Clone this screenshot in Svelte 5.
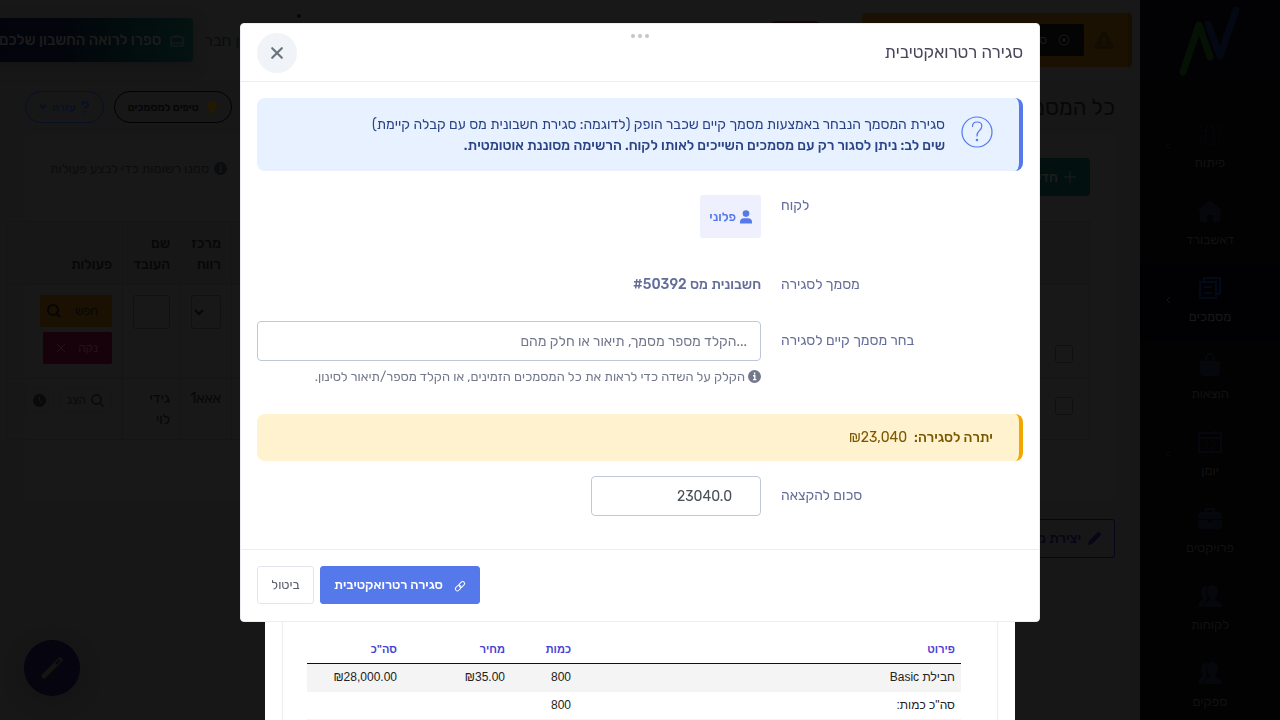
<script lang="ts">
    let search = '';
    let amount = '23040.0';

    const navItems = [
        { label: 'פיתוח', icon: 'bug', arrow: true },
        { label: 'דאשבורד', icon: 'home' },
        { label: 'מסמכים', icon: 'docs', arrow: true, active: true },
        { label: 'הוצאות', icon: 'bag' },
        { label: 'יומן', icon: 'calendar', arrow: true },
        { label: 'פרויקטים', icon: 'case' },
        { label: 'לקוחות', icon: 'users' },
        { label: 'ספקים', icon: 'users' }
    ];
</script>

<div class="page" dir="rtl">
    <aside class="sidebar">
        <a class="logo" href="/" aria-label="ראשי">
            <svg width="64" height="72" viewBox="0 0 64 72" fill="none" stroke-width="7" stroke-linecap="round" stroke-linejoin="round">
                <path d="M30 20 L42 52 L58 6" stroke="#030812" />
                <path d="M5 68 L21 21 L32 53" stroke="#061106" />
            </svg>
        </a>
        <nav>
            {#each navItems as item}
                <a class="nav-item" class:active={item.active} href="/">
                    <svg class="nav-icon" width="24" height="24" viewBox="0 0 24 24" fill="currentColor">
                        {#if item.icon === 'home'}
                            <path d="M12 1 L25 12 H22 V23 H15 V16 H9 V23 H2 V12 H-1 Z" />
                        {:else if item.icon === 'docs'}
                            <path d="M6 5 V2 H22 V18 H18 M2 6 H18 V22 H2 Z M6 11 H14 M6 17 H14" fill="none" stroke="currentColor" stroke-width="2" />
                        {:else if item.icon === 'bag'}
                            <path d="M2 8 H22 V20 Q22 23 19 23 H5 Q2 23 2 20 Z" />
                            <path d="M8 11 V6 Q8 1 12 1 Q16 1 16 6 V11" fill="none" stroke="currentColor" stroke-width="2" />
                        {:else if item.icon === 'calendar'}
                            <path d="M1 3 H23 V22 H1 Z M1 8 H23 M7 1 V4 M17 1 V4" fill="none" stroke="currentColor" stroke-width="2" />
                            <path d="M7 12 L9 11 V19 M12 13 Q13 11 15 11 Q18 12 16 15 L12 19 H17" fill="none" stroke="currentColor" />
                        {:else if item.icon === 'case'}
                            <path d="M7 5 V1 H17 V5 H21 Q24 5 24 8 V12 H0 V8 Q0 5 3 5 Z M9 3 V5 H15 V3 Z" fill-rule="evenodd" />
                            <path d="M0 13 H9 Q12 18 15 13 H24 V19 Q24 22 21 22 H3 Q0 22 0 19 Z" />
                        {:else if item.icon === 'users'}
                            <path d="M8 2 Q2 2 3 9 Q4 14 5 15 Q0 18 0 23 H5 Q6 19 9 16 Q7 8 10 2 Z" />
                            <path d="M15 1 Q20 1 20 8 Q19 13 17 14 V16 Q24 18 24 23 H6 Q6 18 12 16 V14 Q9 12 9 7 Q9 1 15 1 Z" />
                        {:else}
                            <path d="M8 10 Q8 4 12 4 Q16 4 16 10 V23 H8 Z M8 4 L10 5 M16 4 L14 5 M1 4 H5 M19 4 H23 M8 13 L3 17 V23 M16 13 L21 17 V23 M1 10 L5 8 M23 10 L19 8" fill="none" stroke="currentColor" stroke-width="1.4" stroke-dasharray="3 1" />
                        {/if}
                    </svg>
                    <span>{item.label}</span>
                    {#if item.arrow}
                        <svg class="nav-arrow" width="6" height="8" viewBox="0 0 6 8" fill="none" stroke="currentColor">
                            <path d="M4 1 L1 4 L4 7" />
                        </svg>
                    {/if}
                </a>
            {/each}
        </nav>
    </aside>

    <div class="main">
        <header class="topbar">
            <div class="banner">
                <svg width="20" height="18" viewBox="0 0 20 18">
                    <path d="M10 0 Q11 0 12 2 L20 16 Q20 18 18 18 H2 Q0 18 0 16 L8 2 Q9 0 10 0 Z" fill="#120c02" />
                    <path d="M10 6 V11 M10 13 V15" stroke="#1a1102" stroke-width="2" />
                </svg>
                <button class="banner-btn">
                    <svg width="12" height="12" viewBox="0 0 12 12" fill="none" stroke="currentColor">
                        <circle cx="6" cy="6" r="5" />
                        <path d="M4 4 L8 8 M8 4 L4 8" />
                    </svg>
                    סיום
                </button>
            </div>
            <span class="pill"></span>
            <span class="dot"></span>
            <div class="top-links">
                <a class="invite" href="/">הזמן חבר</a>
                <button class="share">
                    <svg width="14" height="13" viewBox="0 0 14 13" fill="none" stroke="currentColor">
                        <path d="M1 3 H13 V12 H1 Z M5 3 Q5 1 7 1 Q9 1 9 3 M1 9 H13" />
                    </svg>
                    ספרו לרואה החשבון שלכם
                </button>
            </div>
        </header>

        <div class="title-row">
            <h1>כל המסמכים</h1>
            <button class="round">
                <svg width="10" height="13" viewBox="0 0 10 13" fill="#211901">
                    <circle cx="5" cy="5" r="5" />
                    <path d="M2 8 H8 L7 12 H3 Z" />
                </svg>
                טיפים למסמכים
            </button>
            <button class="round help">
                <svg width="8" height="12" viewBox="0 0 8 12" fill="none" stroke="currentColor" stroke-width="2">
                    <path d="M1 4 Q1 1 4 1 Q7 1 7 4 Q7 5 4 7 V8 M4 10 V12" />
                </svg>
                <span>עזרה</span>
                <svg width="8" height="6" viewBox="0 0 8 6" fill="none" stroke="currentColor" stroke-width="2">
                    <path d="M1 1 L4 4 L7 1" />
                </svg>
            </button>
        </div>

        <section class="card">
            <div class="card-top">
                <button class="new-btn">
                    <svg width="12" height="12" viewBox="0 0 12 12" stroke="currentColor" stroke-width="1">
                        <path d="M6 0 V12 M0 6 H12" />
                    </svg>
                    חדש
                </button>
                <p class="select-info">
                    <svg width="13" height="13" viewBox="0 0 13 13">
                        <circle cx="6.5" cy="6.5" r="6.5" fill="#0b0c0e" />
                        <path d="M6.6 2.6 V4.4 M5 5.8 H6.8 V9.6 M5 9.6 H8.4" fill="none" stroke="#171717" stroke-width="1.4" />
                    </svg>
                    סמנו רשומות כדי לבצע פעולות
                </p>
            </div>
            <table class="list">
                <thead>
                    <tr>
                        <th class="col-check"></th>
                        <th></th>
                        <th class="col-center">מרכז רווח</th>
                        <th class="col-name">שם העובד</th>
                        <th class="col-actions">פעולות</th>
                    </tr>
                </thead>
                <tbody>
                    <tr class="filters">
                        <td><input type="checkbox" aria-label="בחר הכל" /></td>
                        <td></td>
                        <td>
                            <div class="select-wrap">
                                <select aria-label="מרכז רווח"><option></option></select>
                                <svg width="8" height="6" viewBox="0 0 8 6" fill="none" stroke="currentColor" stroke-width="2">
                                    <path d="M0 1 L4 5 L8 1" />
                                </svg>
                            </div>
                        </td>
                        <td><input type="text" aria-label="שם העובד" /></td>
                        <td>
                            <button class="filter find">
                                חפש
                                <svg width="14" height="14" viewBox="0 0 14 14" fill="none" stroke="currentColor" stroke-width="2">
                                    <circle cx="6" cy="6" r="5" /><path d="M9 9 L13 13" />
                                </svg>
                            </button>
                            <button class="filter clear">
                                נקה
                                <svg width="10" height="10" viewBox="0 0 10 10" stroke="currentColor">
                                    <path d="M1 1 L9 9 M9 1 L1 9" />
                                </svg>
                            </button>
                        </td>
                    </tr>
                    <tr>
                        <td><input type="checkbox" aria-label="בחר" /></td>
                        <td></td>
                        <td>אאא1</td>
                        <td>גידי לוי</td>
                        <td>
                            <div class="row-actions">
                                <button>
                                    <svg width="13" height="13" viewBox="0 0 13 13" fill="none" stroke="currentColor" stroke-width="1.6">
                                        <circle cx="5.5" cy="5.5" r="4.6" /><path d="M9 9 L12.5 12.5" />
                                    </svg>
                                    הצג
                                </button>
                                <button aria-label="היסטוריה">
                                    <svg width="13" height="13" viewBox="0 0 13 13">
                                        <circle cx="6.5" cy="6.5" r="6.5" fill="currentColor" />
                                        <path d="M6.5 2.5 V6.5 L9 8.5" fill="none" stroke="#171717" />
                                    </svg>
                                </button>
                            </div>
                        </td>
                    </tr>
                </tbody>
            </table>
        </section>

        <button class="create">
            <svg width="13" height="13" viewBox="0 0 13 13" fill="currentColor">
                <path d="M0 13 L1 9 L9 1 Q11 -1 12 1 Q14 2 12 4 L4 12 Z" />
            </svg>
            יצירת מסמך חדש
        </button>
    </div>
</div>

<button class="fab" aria-label="עריכה">
    <svg width="24" height="24" viewBox="0 0 24 24">
        <path d="M4 20 L20 4" stroke="#141411" stroke-width="5" stroke-linecap="round" />
        <path d="M16 8 L20 4" stroke="#06040f" stroke-width="2" />
    </svg>
</button>

<div class="sheet-layer" dir="rtl">
    <div class="sheet">
        <div class="paper">
            <table>
                <thead>
                    <tr><th>פירוט</th><th class="qty">כמות</th><th class="price">מחיר</th><th class="sum">סה"כ</th></tr>
                </thead>
                <tbody>
                    <tr class="shaded"><td>חבילת Basic</td><td>800</td><td>₪35.00</td><td>₪28,000.00</td></tr>
                    <tr><td>סה"כ כמות:</td><td>800</td><td></td><td></td></tr>
                </tbody>
            </table>
        </div>
    </div>
</div>

<div class="modal-layer" dir="rtl">
    <div class="modal" role="dialog" aria-labelledby="modal-title">
        <header class="modal-head">
            <h2 id="modal-title">סגירה רטרואקטיבית</h2>
            <span class="grip"><i></i><i></i><i></i></span>
            <button class="close" aria-label="סגור">
                <svg width="12" height="12" viewBox="0 0 12 12" stroke="currentColor" stroke-width="2.2" stroke-linecap="round">
                    <path d="M1.2 1.2 L10.8 10.8 M10.8 1.2 L1.2 10.8" />
                </svg>
            </button>
        </header>

        <div class="modal-body">
            <div class="alert info">
                <svg width="32" height="32" viewBox="0 0 32 32" fill="none" stroke="#5578eb" stroke-width="1.2">
                    <circle cx="16" cy="16" r="15" />
                    <path d="M11.5 10.5 Q11.5 6 16.2 6 Q20.8 6 20.8 10 Q20.8 12.5 18.5 14.5 Q16 16.5 16 20" stroke-linecap="round" />
                    <circle cx="16" cy="24" r="0.7" />
                </svg>
                <p>
                    סגירת המסמך הנבחר באמצעות מסמך קיים שכבר הופק (לדוגמה: סגירת חשבונית מס עם קבלה קיימת)<br />
                    <strong>שים לב: ניתן לסגור רק עם מסמכים השייכים לאותו לקוח. הרשימה מסוננת אוטומטית.</strong>
                </p>
            </div>

            <div class="field customer">
                <span class="label">לקוח</span>
                <div>
                    <a class="customer-tag" href="/">
                        <svg width="12" height="14" viewBox="0 0 12 14" fill="currentColor">
                            <circle cx="6" cy="3.6" r="3.3" />
                            <path d="M0 13.5 V12 Q0 8.2 4 8.2 H8 Q12 8.2 12 12 V13.5 Z" />
                        </svg>
                        פלוני
                    </a>
                </div>
            </div>

            <div class="field doc">
                <span class="label">מסמך לסגירה</span>
                <strong>חשבונית מס #50392</strong>
            </div>

            <div class="field">
                <label class="label" for="doc-search">בחר מסמך קיים לסגירה</label>
                <div>
                    <input id="doc-search" type="text" dir="ltr" placeholder="הקלד מספר מסמך, תיאור או חלק מהם..." bind:value={search} />
                    <p class="hint">
                        <svg width="13" height="13" viewBox="0 0 13 13">
                            <circle cx="6.5" cy="6.5" r="6.5" fill="#74788d" />
                            <path d="M6.6 2.6 V4.4 M5 5.8 H6.8 V9.6 M5 9.6 H8.4" fill="none" stroke="#fff" stroke-width="1.4" />
                        </svg>
                        הקלק על השדה כדי לראות את כל המסמכים הזמינים, או הקלד מספר/תיאור לסינון.
                    </p>
                </div>
            </div>

            <div class="alert balance">
                <strong>יתרה לסגירה:</strong>
                <span>₪23,040</span>
            </div>

            <div class="field">
                <label class="label" for="amount">סכום להקצאה</label>
                <div>
                    <input id="amount" class="amount" type="text" bind:value={amount} />
                </div>
            </div>
        </div>

        <footer class="modal-foot">
            <button class="btn primary">
                <svg width="10" height="10" viewBox="0 0 10 10" fill="none" stroke="currentColor" stroke-width="1">
                    <rect x="-3.2" y="-2" width="6.4" height="4" rx="2" transform="translate(6.8 3.4) rotate(-45)" />
                    <rect x="-3.2" y="-2" width="6.4" height="4" rx="2" transform="translate(3.2 7) rotate(-45)" />
                </svg>
                סגירה רטרואקטיבית
            </button>
            <button class="btn cancel">ביטול</button>
        </footer>
    </div>
</div>

<style>
    :global(body) {
        background: #171717;
        font-family: Rubik, "Open Sans", sans-serif;
        font-size: 14px;
        line-height: 21px;
        overflow: hidden;
    }

    :global(*) {
        box-sizing: border-box;
    }

    button,
    input,
    select {
        font: inherit;
        margin: 0;
    }

    button {
        border: 0;
        padding: 0;
        display: inline-flex;
        align-items: center;
        white-space: nowrap;
    }

    a {
        text-decoration: none;
    }

    h1,
    h2,
    p {
        margin: 0;
        font-weight: 400;
    }

    strong,
    th {
        font-weight: 500;
    }

    svg {
        flex-shrink: 0;
        overflow: visible;
    }

    /* sidebar */
    .page {
        display: flex;
        height: 100vh;
        overflow: hidden;
        color: #070707;
    }

    .sidebar {
        width: 140px;
        flex-shrink: 0;
        background: #020202;
    }

    .logo {
        display: flex;
        justify-content: center;
        height: 80px;
        padding-top: 4px;
        background: #020204;
    }

    nav {
        padding-top: 30px;
    }

    .nav-item {
        position: relative;
        height: 77px;
        display: flex;
        flex-direction: column;
        align-items: center;
        gap: 6px;
        padding-top: 12px;
        color: #111;
        font-size: 13px;
    }

    .nav-icon {
        color: #06070c;
    }

    .nav-item.active {
        background: #010103;
        color: #181818;
    }

    .active .nav-icon {
        color: #030a17;
    }

    .nav-arrow {
        position: absolute;
        left: 26px;
        top: 32px;
        color: #0a0a0a;
    }

    .active .nav-arrow {
        color: #161616;
    }

    /* page behind the dialog */
    .main {
        flex: 1;
        min-width: 0;
    }

    .topbar {
        height: 80px;
        display: flex;
        align-items: flex-start;
        padding: 13px 8px 0 0;
        background: #181818;
    }

    .banner {
        width: 270px;
        height: 54px;
        display: flex;
        align-items: center;
        gap: 10px;
        padding-right: 14px;
        background: #1a1102;
        border-right: 4px solid #160e01;
        border-radius: 4px;
    }

    .banner-btn {
        height: 32px;
        gap: 11px;
        padding: 0 14px;
        background: #040404;
        color: #1a1a1a;
        border-radius: 2px;
        font-size: 12px;
    }

    .pill {
        width: 66px;
        height: 32px;
        margin: 8px 34px 0 0;
        border-radius: 16px;
        background: #17030a;
    }

    .dot {
        width: 4px;
        height: 4px;
        margin: 1px auto 0 32px;
        border-radius: 50%;
        background: #030815;
    }

    .top-links {
        display: flex;
        align-items: center;
        gap: 11px;
        margin-top: 5px;
        margin-left: -15px;
    }

    .invite {
        color: #0b0c10;
        font-size: 16px;
    }

    .share {
        height: 44px;
        gap: 9px;
        padding: 0 9px 0 14px;
        border-radius: 4px;
        background: linear-gradient(270deg, #031310, #02060b 60%, #02040b);
        color: #1c1c1c;
        font-size: 15px;
        font-weight: 500;
        box-shadow: 0 4px 14px #141414;
    }

    .title-row {
        display: flex;
        align-items: center;
        gap: 10px;
        height: 54px;
        padding: 0 25px;
    }

    h1 {
        flex: 1;
        font-size: 22px;
    }

    .round {
        height: 32px;
        gap: 8px;
        padding: 0 14px 0 13px;
        border: 1px solid #020202;
        border-radius: 16px;
        background: transparent;
        color: #050505;
        font-size: 11px;
        font-weight: 500;
    }

    .help {
        gap: 5px;
        padding: 0 14px 0 13px;
        border-color: #081024;
        color: #081024;
    }

    .card {
        margin: 0 25px;
        height: 366px;
        padding: 24px 25px 0;
        background: #181818;
        border-radius: 4px;
    }

    .card-top {
        display: flex;
        justify-content: space-between;
        height: 63px;
    }

    .new-btn {
        height: 38px;
        gap: 6px;
        padding: 0 14px;
        border-radius: 4px;
        background: #021110;
        color: #1d1d1d;
        font-weight: 500;
    }

    .select-info {
        display: flex;
        align-items: center;
        gap: 5px;
        height: 21px;
        color: #0c0c0e;
        font-size: 13px;
    }

    .list {
        width: calc(100% + 43px);
        table-layout: fixed;
        border-collapse: collapse;
    }

    .list th,
    .list td {
        border: 1px solid #151515;
        padding: 9px 10px;
        vertical-align: top;
        text-align: right;
    }

    .list th {
        height: 63px;
        vertical-align: bottom;
        background: #171717;
    }

    .col-check {
        width: 51px;
    }

    .col-center {
        width: 51px;
    }

    .col-name {
        width: 58px;
    }

    .col-actions {
        width: 115px;
    }

    .list .filters td {
        height: 94px;
        padding-top: 10px;
    }

    .list input[type='text'],
    .list select {
        appearance: none;
        display: block;
        width: 100%;
        height: 34px;
        border: 1px solid #111;
        border-radius: 3px;
        background: transparent;
    }

    .select-wrap {
        position: relative;
    }

    .select-wrap svg {
        position: absolute;
        left: 4px;
        top: 14px;
    }

    .list input[type='checkbox'] {
        appearance: none;
        display: block;
        width: 18px;
        height: 18px;
        margin: 50px 6px 0;
        border: 1px solid #101010;
        border-radius: 3px;
    }

    .list tr:last-child input[type='checkbox'] {
        margin-top: 9px;
    }

    .filter {
        height: 32px;
        padding: 0 14px;
        border-radius: 2px;
        font-size: 12px;
        margin-bottom: 5px;
    }

    .find {
        width: 72px;
        gap: 14px;
        background: #1a1102;
        color: #060606;
    }

    .clear {
        width: 69px;
        gap: 12px;
        background: #17020b;
        color: #24141a;
    }

    .row-actions {
        display: flex;
        gap: 5px;
    }

    .row-actions button {
        height: 24px;
        gap: 5px;
        padding: 0 7px;
        border: 1px solid #161616;
        background: transparent;
        color: #0a0a0c;
        font-size: 12px;
    }

    .create {
        height: 39px;
        gap: 7px;
        margin: 19px 25px 0;
        padding: 0 13px;
        border: 1px solid #070518;
        border-radius: 3px;
        background: transparent;
        color: #070518;
        font-weight: 500;
    }

    .fab {
        position: fixed;
        left: 24px;
        bottom: 24px;
        width: 56px;
        height: 56px;
        justify-content: center;
        border-radius: 50%;
        background: #06040f;
        box-shadow: 0 6px 18px #141416;
    }

    /* document preview */
    .sheet-layer,
    .modal-layer {
        position: fixed;
        inset: 0;
        display: flex;
        justify-content: center;
    }

    .sheet-layer {
        align-items: flex-end;
    }

    .sheet {
        width: 750px;
        height: 92%;
        padding: 0 17px;
        background: #fff;
    }

    .paper {
        height: 100%;
        display: flex;
        align-items: flex-end;
        padding: 0 36px 0 24px;
        border: solid #ececec;
        border-width: 0 1px;
        font-family: "Liberation Sans", sans-serif;
        font-size: 12px;
        color: #222;
    }

    .paper table {
        width: 100%;
        border-collapse: collapse;
    }

    .paper th,
    .paper td {
        height: 28px;
        padding: 0 6px;
        text-align: right;
    }

    .paper th {
        color: #4a3fd6;
        font-size: 11px;
        font-weight: 700;
        border-bottom: 1px solid #111;
    }

    .paper tbody tr {
        border-bottom: 1px solid #f3f3f3;
    }

    .shaded {
        background: #f4f4f4;
    }

    .qty {
        width: 66px;
    }

    .price {
        width: 108px;
    }

    .sum {
        width: 96px;
    }

    /* dialog */
    .modal-layer {
        align-items: flex-start;
        padding: 23px 16px;
    }

    .modal {
        width: 100%;
        max-width: 800px;
        background: #fff;
        border: 1px solid #ebedf2;
        border-radius: 4px;
        color: #646c9a;
    }

    .modal-head {
        position: relative;
        display: flex;
        align-items: center;
        justify-content: space-between;
        height: 58px;
        padding: 0 16px;
        border-bottom: 1px solid #ebedf2;
    }

    h2 {
        font-size: 17px;
        color: #48465b;
    }

    .grip {
        position: absolute;
        top: 10px;
        left: 50%;
        transform: translateX(-50%);
        display: flex;
        gap: 3px;
    }

    .grip i {
        width: 4px;
        height: 4px;
        border-radius: 50%;
        background: #c5c5cb;
    }

    .close {
        width: 40px;
        height: 40px;
        justify-content: center;
        border-radius: 50%;
        background: #f0f3f8;
        color: #6c757d;
    }

    .modal-body {
        padding: 16px 16px 33px;
    }

    .alert {
        display: flex;
        align-items: center;
        border-radius: 8px;
    }

    .info {
        gap: 16px;
        height: 73px;
        padding: 0 26px 0 16px;
        margin-bottom: 24px;
        border-right: 4px solid #5578eb;
        background: #e7f1ff;
        color: #2a4385;
        white-space: nowrap;
    }

    .info svg {
        margin-bottom: 5px;
    }

    .field {
        display: grid;
        grid-template-columns: 12fr 25fr;
        column-gap: 20px;
        align-items: start;
    }

    .label {
        padding-top: 9px;
        text-align: left;
    }

    .customer .label,
    .doc .label {
        padding-top: 0;
    }

    .customer {
        margin-bottom: 36px;
    }

    .customer-tag {
        display: inline-flex;
        align-items: center;
        gap: 4px;
        height: 43px;
        padding: 0 9px;
        border-radius: 3px;
        background: #eef0fd;
        color: #5578eb;
        font-size: 13px;
        font-weight: 500;
    }

    .customer-tag,
    .field input {
        vertical-align: top;
    }

    .doc {
        margin-bottom: 26px;
    }

    .field input {
        width: 100%;
        height: 40px;
        padding: 0 13px;
        border: 1px solid #c0c7d8;
        border-radius: 4px;
        background: #fff;
        color: #495057;
        text-align: right;
    }

    .field input::placeholder {
        color: #74788d;
        opacity: 1;
    }

    .field .amount {
        width: 170px;
        padding: 0 28px;
    }

    .hint {
        display: flex;
        align-items: center;
        gap: 3px;
        margin-top: 5px;
        color: #74788d;
        font-size: 13px;
        white-space: nowrap;
    }

    .balance {
        gap: 7px;
        height: 47px;
        margin: 27px 0 15px;
        padding: 0 26px;
        border-right: 4px solid #f0a800;
        background: #fff2cf;
        color: #7d5700;
    }

    .modal-foot {
        display: flex;
        justify-content: flex-end;
        gap: 6px;
        padding: 16px 16px 17px;
        border-top: 1px solid #ebedf2;
    }

    .btn {
        height: 38px;
        padding: 0 13px 2px;
        border: 1px solid #e2e5ec;
        border-radius: 3px;
        background: #fff;
        color: #595d6e;
        font-size: 13px;
    }

    .cancel {
        min-width: 57px;
        justify-content: center;
    }

    .primary {
        gap: 12px;
        padding: 0 14px 2px 13px;
        border-color: #5578eb;
        background: #5578eb;
        color: #fff;
        font-weight: 500;
    }

    .primary svg {
        margin-top: 4px;
    }
</style>
